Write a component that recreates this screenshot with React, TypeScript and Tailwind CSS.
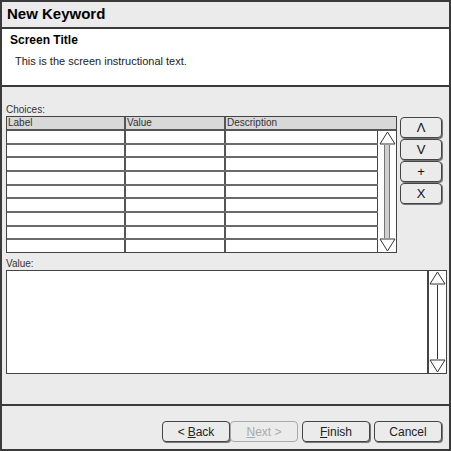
import React from 'react';

// Wireframe dialog: "New Keyword"

const FONT = { fontFamily: '"Liberation Sans", Arial, sans-serif' };

const ROWS = Array.from({ length: 9 });

function ScrollBar({ track }: { track: 'strip' | 'line' }) {
  return (
    <div className="flex h-full w-full flex-col items-center">
      <svg width="17" height="14" viewBox="0 0 17 14" className="shrink-0">
        <path d="M8.5 1 L1 13 L16 13 Z" fill="white" stroke="#333" strokeWidth="1" strokeLinejoin="round" />
      </svg>
      {track === 'strip' ? (
        <div className="w-[6px] flex-1 border-x border-[#777] bg-[#cfcfcf]" />
      ) : (
        <div className="w-px flex-1 bg-[#333]" />
      )}
      <svg width="17" height="14" viewBox="0 0 17 14" className="shrink-0">
        <path d="M1 1 L16 1 L8.5 13 Z" fill="white" stroke="#333" strokeWidth="1" strokeLinejoin="round" />
      </svg>
    </div>
  );
}

function SideButton({ label }: { label: string }) {
  return (
    <div className="flex h-[21px] items-center justify-center rounded-[4px] border border-[#444] bg-[#ebebeb] text-[13px] text-[#111] shadow-[1px_1px_0_#777]">
      {label}
    </div>
  );
}

function WizardButton({ children, disabled }: { children: React.ReactNode; disabled?: boolean }) {
  return (
    <div
      className={
        disabled
          ? 'flex h-[21px] w-[68px] items-center justify-center rounded-[4px] border border-[#aaa] bg-[#ebebeb] text-[12px] text-[#aaa]'
          : 'flex h-[21px] w-[68px] items-center justify-center rounded-[4px] border border-[#444] bg-[#ebebeb] text-[12px] text-[#222] shadow-[1px_1px_0_#777]'
      }
    >
      {children}
    </div>
  );
}

export default function App() {
  return (
    <div className="flex h-[451px] w-[451px] flex-col border-2 border-[#3a3a3a] bg-[#ebebeb]" style={FONT}>
      {/* Title bar */}
      <div className="flex h-[27px] shrink-0 items-center border-b-2 border-[#3a3a3a] pl-[5px] text-[15px] font-bold text-black">
        New Keyword
      </div>

      {/* Header */}
      <div className="h-[58px] shrink-0 border-b-2 border-[#3a3a3a] bg-white pl-[8px] pt-[4px]">
        <div className="text-[12px] font-bold leading-[14px] text-black">Screen Title</div>
        <div className="mt-[7px] pl-[5px] text-[11px] leading-[14px] text-[#222]">
          This is the screen instructional text.
        </div>
      </div>

      {/* Main */}
      <div className="flex h-[319px] shrink-0 flex-col border-b-2 border-[#3a3a3a] pl-[4px] pt-[17px]">
        <div className="h-[12px] text-[10px] leading-[12px] text-[#333]">Choices:</div>
        <div className="flex gap-[3px]">
          <div className="flex h-[137px] w-[391px] flex-col border border-[#444] bg-white">
            <div className="grid h-[14px] shrink-0 grid-cols-[119px_100px_1fr] border-b-2 border-[#555] bg-[#d8d8d8] text-[10px] leading-[12px] text-[#333]">
              <div className="border-r-2 border-[#555] pl-[1px]">Label</div>
              <div className="border-r-2 border-[#555] pl-[1px]">Value</div>
              <div className="pl-[1px]">Description</div>
            </div>
            <div className="flex flex-1">
              <div className="flex flex-1 flex-col">
                {ROWS.map((_, i) => (
                  <div
                    key={i}
                    className={
                      i < ROWS.length - 1
                        ? 'grid flex-1 grid-cols-[119px_100px_1fr] border-b-2 border-[#6a6a6a]'
                        : 'grid flex-1 grid-cols-[119px_100px_1fr]'
                    }
                  >
                    <div className="border-r-2 border-[#555]" />
                    <div className="border-r-2 border-[#555]" />
                    <div className="border-r border-[#444]" />
                  </div>
                ))}
              </div>
              <div className="w-[18px]">
                <ScrollBar track="strip" />
              </div>
            </div>
          </div>
          <div className="flex w-[42px] flex-col gap-[1px] pt-[1px]">
            <SideButton label="Λ" />
            <SideButton label="V" />
            <SideButton label="+" />
            <SideButton label="X" />
          </div>
        </div>

        <div className="mt-[5px] h-[11px] text-[10px] leading-[11px] text-[#333]">Value:</div>
        <div className="mt-[1px] flex h-[104px] w-[441px] border border-[#444] bg-white">
          <div className="flex-1" />
          <div className="w-[19px] border-l-2 border-[#444]">
            <ScrollBar track="line" />
          </div>
        </div>
      </div>

      {/* Footer */}
      <div className="flex flex-1 items-start justify-end pr-[7px] pt-[15px]">
        <div className="flex gap-[4px]">
          <div className="flex">
            <WizardButton>
              &lt; <span className="ml-[3px] underline">B</span>ack
            </WizardButton>
            <WizardButton disabled>
              <span className="underline">N</span>ext &gt;
            </WizardButton>
          </div>
          <WizardButton>
            <span className="underline">F</span>inish
          </WizardButton>
          <WizardButton>Cancel</WizardButton>
        </div>
      </div>
    </div>
  );
}
